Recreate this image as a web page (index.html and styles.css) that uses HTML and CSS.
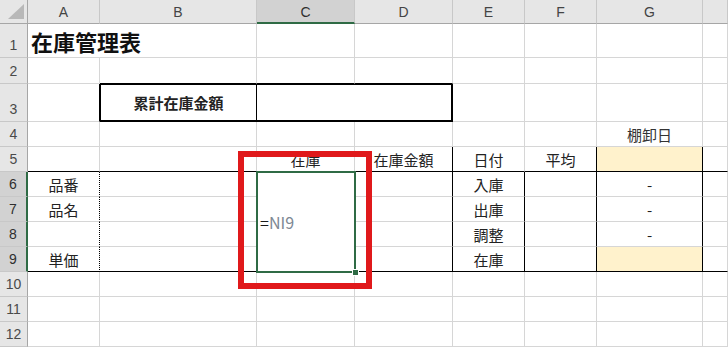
FILE: index.html
```html
<!DOCTYPE html>
<html lang="ja">
<head>
<meta charset="utf-8">
<title>在庫管理表</title>
<link rel="stylesheet" href="styles.css">
</head>
<body>
<div class="sheet">
  <!-- header row -->
  <div class="corner"><div class="tri"></div></div>
  <div class="ch">A</div>
  <div class="ch">B</div>
  <div class="ch ch-sel">C</div>
  <div class="ch">D</div>
  <div class="ch">E</div>
  <div class="ch">F</div>
  <div class="ch">G</div>
  <div class="ch"></div>

  <!-- row 1 -->
  <div class="rh">1</div>
  <div class="c title span2">在庫管理表</div>
  <div class="c"></div><div class="c"></div><div class="c"></div><div class="c"></div><div class="c"></div><div class="c"></div>

  <!-- row 2 -->
  <div class="rh">2</div>
  <div class="c"></div>
  <div class="c bb-k"></div>
  <div class="c bb-k"></div>
  <div class="c bb-k"></div>
  <div class="c"></div><div class="c"></div><div class="c"></div><div class="c"></div>

  <!-- row 3 -->
  <div class="rh">3</div>
  <div class="c br-k"></div>
  <div class="c box-left bold">累計在庫金額</div>
  <div class="c box-right span2"></div>
  <div class="c"></div><div class="c"></div><div class="c"></div><div class="c"></div>

  <!-- row 4 -->
  <div class="rh">4</div>
  <div class="c"></div><div class="c"></div><div class="c"></div><div class="c"></div><div class="c"></div><div class="c"></div>
  <div class="c soft">棚卸日</div>
  <div class="c"></div>

  <!-- row 5 -->
  <div class="rh">5</div>
  <div class="c bb-k"></div>
  <div class="c bb-k"></div>
  <div class="c bb-k">在庫</div>
  <div class="c bb-k br-k">在庫金額</div>
  <div class="c bb-k">日付</div>
  <div class="c bb-k br-k">平均</div>
  <div class="c bb-k br-k yellow"></div>
  <div class="c bb-k"></div>

  <!-- row 6 -->
  <div class="rh rh-sel">6</div>
  <div class="c dotted">品番</div>
  <div class="c"></div>
  <div class="c merged bb-k"><span class="eq">=</span><span class="ref">NI9</span><span class="handle"></span></div>
  <div class="c br-k"></div>
  <div class="c br-k">入庫</div>
  <div class="c br-k"></div>
  <div class="c br-k">-</div>
  <div class="c"></div>

  <!-- row 7 -->
  <div class="rh rh-sel">7</div>
  <div class="c dotted">品名</div>
  <div class="c"></div>
  <div class="c br-k"></div>
  <div class="c br-k">出庫</div>
  <div class="c br-k"></div>
  <div class="c br-k">-</div>
  <div class="c"></div>

  <!-- row 8 -->
  <div class="rh rh-sel">8</div>
  <div class="c dotted"></div>
  <div class="c"></div>
  <div class="c br-k"></div>
  <div class="c br-k">調整</div>
  <div class="c br-k"></div>
  <div class="c br-k">-</div>
  <div class="c"></div>

  <!-- row 9 -->
  <div class="rh rh-sel">9</div>
  <div class="c dotted bb-k">単価</div>
  <div class="c bb-k"></div>
  <div class="c bb-k br-k"></div>
  <div class="c bb-k br-k">在庫</div>
  <div class="c bb-k br-k"></div>
  <div class="c bb-k br-k yellow"></div>
  <div class="c bb-k"></div>

  <!-- row 10 -->
  <div class="rh">10</div>
  <div class="c"></div><div class="c"></div><div class="c"></div><div class="c"></div><div class="c"></div><div class="c"></div><div class="c"></div><div class="c"></div>

  <!-- row 11 -->
  <div class="rh">11</div>
  <div class="c"></div><div class="c"></div><div class="c"></div><div class="c"></div><div class="c"></div><div class="c"></div><div class="c"></div><div class="c"></div>

  <!-- row 12 -->
  <div class="rh">12</div>
  <div class="c"></div><div class="c"></div><div class="c"></div><div class="c"></div><div class="c"></div><div class="c"></div><div class="c"></div><div class="c"></div>

  <div class="callout"></div>
</div>
</body>
</html>
```

FILE: styles.css
```css
* {
  box-sizing: border-box;
}

html, body {
  margin: 0;
  padding: 0;
  background: #ffffff;
}

body {
  font-family: "Noto Sans CJK JP", "Noto Sans", sans-serif;
  color: #1a1a1a;
}

.sheet {
  position: relative;
  display: grid;
  grid-template-columns: 28px 72px 157px 98px 98px 72px 72px 106px 25px;
  grid-template-rows: 24px 34px 26px 38px repeat(9, 25px);
  width: 728px;
  height: 348px;
  overflow: hidden;
  background: #ffffff;
}

/* corner */
.corner {
  background: #e6e6e6;
  border-right: 1px solid #a6a6a6;
  border-bottom: 1px solid #a6a6a6;
  display: flex;
  justify-content: flex-end;
  align-items: flex-end;
  padding: 0 3px 4px 0;
}

.tri {
  width: 16px;
  height: 15px;
  background: #b8b8b8;
  clip-path: polygon(100% 0, 100% 100%, 0 100%);
}

/* column headers */
.ch {
  background: #e6e6e6;
  border-right: 1px solid #c8c8c8;
  border-bottom: 1px solid #a6a6a6;
  display: flex;
  justify-content: center;
  align-items: center;
  padding-top: 1px;
  font-family: "Liberation Sans", Arial, sans-serif;
  font-size: 14px;
  line-height: 1;
  color: #444444;
}

.ch-sel {
  background: #d2d2d2;
  border-bottom: 2px solid #2f6b45;
  color: #2f2f2f;
}

/* row headers */
.rh {
  background: #e6e6e6;
  border-right: 1px solid #a6a6a6;
  border-bottom: 1px solid #c8c8c8;
  display: flex;
  justify-content: center;
  align-items: flex-end;
  padding-bottom: 5px;
  font-family: "Liberation Sans", Arial, sans-serif;
  font-size: 14px;
  line-height: 1;
  color: #4a4a4a;
}

.rh-sel {
  background: #d2d2d2;
  border-right: 2px solid #2f6b45;
  color: #2f2f2f;
}

/* cells */
.c {
  border-right: 1px solid #d6d6d6;
  border-bottom: 1px solid #d6d6d6;
  display: flex;
  justify-content: center;
  align-items: center;
  font-size: 15px;
  line-height: 1;
  white-space: nowrap;
  color: #222222;
}

.span2 {
  grid-column: span 2;
}

.title {
  justify-content: flex-start;
  padding-left: 3px;
  font-size: 22px;
  font-weight: 700;
  color: #111111;
}

.bold {
  font-weight: 700;
}

.soft {
  color: #333333;
}

.bb-k {
  border-bottom-color: #000000;
}

.br-k {
  border-right-color: #000000;
}

.dotted {
  border-right: 1px dotted #000000;
}

.yellow {
  background: #fff2cc;
}

/* B3:D3 boxed area */
.box-left {
  border-left: 1px solid #000000;
  border-top: 1px solid #000000;
  border-right-color: #000000;
  border-bottom: 2px solid #000000;
}

.box-right {
  border-top: 1px solid #000000;
  border-right: 2px solid #000000;
  border-bottom: 2px solid #000000;
}

/* merged selected cell C6:C9 */
.merged {
  grid-row: span 4;
  position: relative;
  justify-content: flex-start;
  padding-left: 3px;
  padding-top: 1px;
  font-size: 16px;
}

.merged::after {
  content: "";
  position: absolute;
  top: -1px;
  left: -1px;
  right: -2px;
  bottom: -2px;
  border: 2px solid #2f6b45;
  pointer-events: none;
}

.eq {
  color: #1a1a1a;
}

.ref {
  color: #7d8894;
}

.handle {
  position: absolute;
  right: -5px;
  bottom: -5px;
  width: 7px;
  height: 7px;
  background: #2f6b45;
  border: 1px solid #ffffff;
  z-index: 2;
}

/* red callout rectangle */
.callout {
  position: absolute;
  left: 238px;
  top: 151px;
  width: 134px;
  height: 138px;
  border: 6px solid #e0191b;
  pointer-events: none;
  z-index: 3;
}
```
